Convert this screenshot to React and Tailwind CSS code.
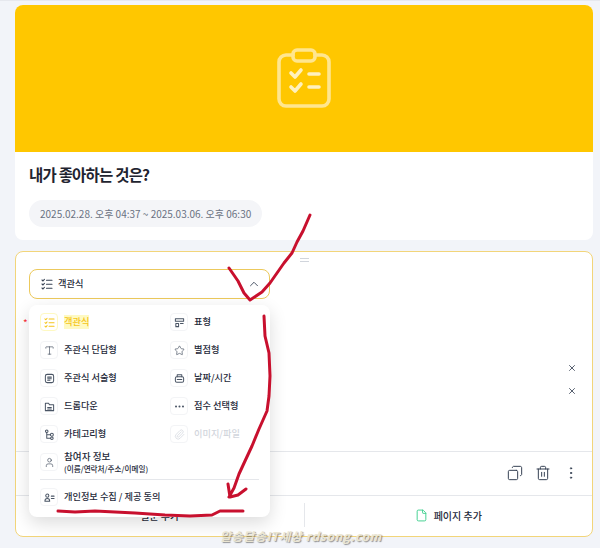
import React from 'react';
import { ChevronUp, Copy, EllipsisVertical, File, Paperclip, Star, Trash2, Type, User, X } from 'lucide-react';

const FONT = 'font-["Noto_Sans_CJK_KR","Noto_Sans",sans-serif]';

// 패키지에 없는 작은 아이콘들
const Glyph = ({ size = 11, children }) => (
  <svg width={size} height={size} viewBox="0 0 12 12" fill="none" stroke="currentColor" strokeWidth="1.1" strokeLinecap="round" strokeLinejoin="round">
    {children}
  </svg>
);

const ChoiceIcon = ({ size }) => (
  <Glyph size={size}>
    <path d="M1 2l1 1 1.4-1.6M1 6l1 1 1.4-1.6M1 10l1 1 1.4-1.6M5.5 2.2H11M5.5 6.2H11M5.5 10.2H11" />
  </Glyph>
);
const TableIcon = () => (
  <Glyph>
    <path d="M1.5 2h9v2.6h-9zM2 7h3v3.5H2zM7 7h3" />
  </Glyph>
);
const EssayIcon = () => (
  <Glyph>
    <rect x="1.5" y="1.5" width="9" height="9" rx="2" />
    <path d="M4 4.5h4M4 6.2h4M4 7.9h2.5" />
  </Glyph>
);
const DropIcon = () => (
  <Glyph>
    <path d="M1.5 2.5h3.5l1 1.5h4.5v6.5h-9zM4 7h4M4 8.8h4" />
  </Glyph>
);
const DateIcon = () => (
  <Glyph>
    <rect x="1.5" y="4" width="9" height="6" rx="1.6" />
    <path d="M3.5 4V2h5v2M3.5 7h5" />
  </Glyph>
);
const DotsIcon = () => (
  <svg width="11" height="11" viewBox="0 0 12 12" fill="currentColor">
    <circle cx="2.2" cy="6" r="1.1" />
    <circle cx="6" cy="6" r="1.1" />
    <circle cx="9.8" cy="6" r="1.1" />
  </svg>
);
const TreeIcon = () => (
  <Glyph>
    <circle cx="3" cy="2.4" r="1.4" />
    <circle cx="8.6" cy="6.2" r="1.6" />
    <circle cx="8.6" cy="10" r="1.4" />
    <path d="M3 3.8V6.2h4M3 6.2V10h4.2" />
  </Glyph>
);
const ConsentIcon = () => (
  <Glyph>
    <circle cx="3.6" cy="4" r="1.7" />
    <path d="M1 10c0-2 1.1-3 2.6-3s2.6 1 2.6 3zM8 4.5h3M8 7h3" />
  </Glyph>
);

const Chip = ({ icon, active, off }) => (
  <span
    className={`flex h-[18px] w-[18px] shrink-0 items-center justify-center rounded-[4px] border ${
      off ? 'border-gray-100 text-gray-300' : active ? 'border-yellow-100 text-[#f5c518]' : 'border-gray-100 text-gray-600'
    }`}
  >
    {icon}
  </span>
);

const MenuItem = ({ icon, label, active, off }) => (
  <div className="flex h-7 items-center gap-[6px]">
    <Chip icon={icon} active={active} off={off} />
    <span
      className={`text-[9.2px] font-medium ${
        active ? 'bg-yellow-100 font-bold text-[#f5c518]' : off ? 'text-gray-300' : 'text-gray-800'
      }`}
    >
      {label}
    </span>
  </div>
);

const leftItems = [
  { icon: <ChoiceIcon />, label: '객관식', active: true },
  { icon: <Type size={11} strokeWidth={1.5} />, label: '주관식 단답형' },
  { icon: <EssayIcon />, label: '주관식 서술형' },
  { icon: <DropIcon />, label: '드롭다운' },
  { icon: <TreeIcon />, label: '카테고리형' },
];

const rightItems = [
  { icon: <TableIcon />, label: '표형' },
  { icon: <Star size={11} strokeWidth={1.5} />, label: '별점형' },
  { icon: <DateIcon />, label: '날짜/시간' },
  { icon: <DotsIcon />, label: '점수 선택형' },
  { icon: <Paperclip size={11} strokeWidth={1.5} />, label: '이미지/파일', off: true },
];

const TypeMenu = () => (
  <div className="absolute left-[13px] top-[53px] z-10 h-[212px] w-[241px] rounded-lg bg-white px-[11px] pt-[3px] shadow-[0_6px_18px_rgba(0,0,0,0.14)]">
    <div className="grid grid-cols-[130px_1fr]">
      <div>
        {leftItems.map((item) => (
          <MenuItem key={item.label} {...item} />
        ))}
      </div>
      <div>
        {rightItems.map((item) => (
          <MenuItem key={item.label} {...item} />
        ))}
      </div>
    </div>
    <div className="flex h-7 items-center gap-[6px]">
      <Chip icon={<User size={11} strokeWidth={1.5} />} />
      <div className="text-gray-800">
        <div className="text-[9.6px] font-medium leading-[13px]">참여자 정보</div>
        <div className="text-[7.6px] font-medium leading-[11px]">(이름/연락처/주소/이메일)</div>
      </div>
    </div>
    <div className="mt-[3px] border-t border-gray-200 pt-[3px]">
      <div className="flex h-7 items-center gap-[6px]">
        <Chip icon={<ConsentIcon />} />
        <span className="text-[9.2px] font-medium text-gray-800">개인정보 수집 / 제공 동의</span>
      </div>
    </div>
  </div>
);

const Annotations = () => (
  <svg className="absolute inset-0 z-20" width="600" height="548" fill="none" stroke="#c8102e" strokeWidth="3" strokeLinecap="round" strokeLinejoin="round">
    <path d="M310 214 L303 230 L297 241 L292 252 L284 262 L277 272 L270 282 L262 291 L250 299 L244 292 L238 280 L229 267" />
    <path d="M264 315 L265 335 L269 352 L270 375 L269 395 L267 410 L259 428 L252 445 L245 460 L239 473 L234 487 L229 496 M228 483 L230 496 L238 494 L246 488" />
    <path d="M58 510 L75 511 L95 510 L115 511 L135 512 L165 514 L190 515 L212 514 L220 510 L232 510 L243 510" />
  </svg>
);

export default function App() {
  return (
    <div className={`relative h-[548px] w-[600px] overflow-hidden border-t border-[#e6e8ee] bg-[#f2f4f9] ${FONT}`}>
      <div className="flex flex-col gap-[11px] pl-[15px] pr-[7px] pt-[4px]">
        {/* 설문 헤더 */}
        <div className="h-[235px] overflow-hidden rounded-lg bg-white">
          <div className="flex h-[147px] items-center justify-center bg-[#ffc700]">
            <svg width="56" height="62" viewBox="0 0 56 62" fill="none" stroke="#ffe68f" strokeWidth="3.6" strokeLinecap="round" strokeLinejoin="round">
              <path d="M17 7H10a7 7 0 0 0-7 7v37a7 7 0 0 0 7 7h36a7 7 0 0 0 7-7V14a7 7 0 0 0-7-7h-7" />
              <rect x="17" y="2" width="22" height="11" rx="4" />
              <path d="M15 25l4 4 6-7M15 39l4 4 6-7M33 26h10M33 39h10" stroke="#fff1bd" />
            </svg>
          </div>
          <div className="px-[14px] pt-[9px]">
            <h1 className="text-[15.5px] font-bold leading-[26px] tracking-[-0.8px] text-[#1f2430]">내가 좋아하는 것은?</h1>
            <div className="mt-[13px] inline-flex h-[27px] items-center rounded-full bg-[#f4f5f8] px-[11px] text-[10px] text-gray-500">
              2025.02.28. 오후 04:37 ~ 2025.03.06. 오후 06:30
            </div>
          </div>
        </div>

        {/* 질문 카드 */}
        <div className="relative flex h-[286px] flex-col rounded-lg border border-[#f2d57a] bg-white">
          <div className="flex h-[17px] justify-center pt-[6px]">
            <div className="h-[4px] w-[9px] border-y border-gray-300" />
          </div>
          <div className="ml-[13px] flex h-[30px] w-[241px] items-center gap-[5px] rounded-lg border border-[#ecc95c] pl-[11px] pr-[8px]">
            <span className="text-gray-700">
              <ChoiceIcon size={12} />
            </span>
            <span className="flex-1 text-[9.2px] font-medium text-gray-800">객관식</span>
            <ChevronUp size={14} strokeWidth={1.5} className="text-gray-700" />
          </div>
          <TypeMenu />
          <div className="relative flex-1">
            <span className="absolute left-[7px] top-[19px] text-[10px] leading-none text-red-500">*</span>
            <div className="absolute right-[15px] top-[64px] flex flex-col gap-[13px] text-gray-700">
              <X size={10} strokeWidth={2} />
              <X size={10} strokeWidth={2} />
            </div>
          </div>
          <div className="flex h-[44px] items-center justify-end gap-[12px] border-t border-gray-200 pb-[2px] pr-[13px] text-gray-700">
            <Copy size={16} strokeWidth={1.5} className="-scale-x-100" />
            <Trash2 size={16} strokeWidth={1.5} />
            <EllipsisVertical size={16} strokeWidth={1.5} />
          </div>
          <div className="flex h-[41px] items-center border-t border-gray-200 pb-[2px]">
            <div className="flex h-[24px] flex-1 items-center justify-center border-r border-gray-200 text-[10px] font-medium text-gray-800">
              질문 추가
            </div>
            <div className="flex flex-1 items-center justify-center gap-[6px] text-[10px] font-medium text-gray-800">
              <File size={13} strokeWidth={1.75} className="text-[#3ecf8e]" />
              페이지 추가
            </div>
          </div>
        </div>
      </div>

      <Annotations />
      <div className="absolute left-[220px] top-[526px] z-20 text-[12px] font-bold italic tracking-[0.6px] text-[#ebe6d2] [text-shadow:1px_1px_1px_rgba(80,80,80,0.6)]">
        알송달송IT세상 rdsong.com
      </div>
    </div>
  );
}
